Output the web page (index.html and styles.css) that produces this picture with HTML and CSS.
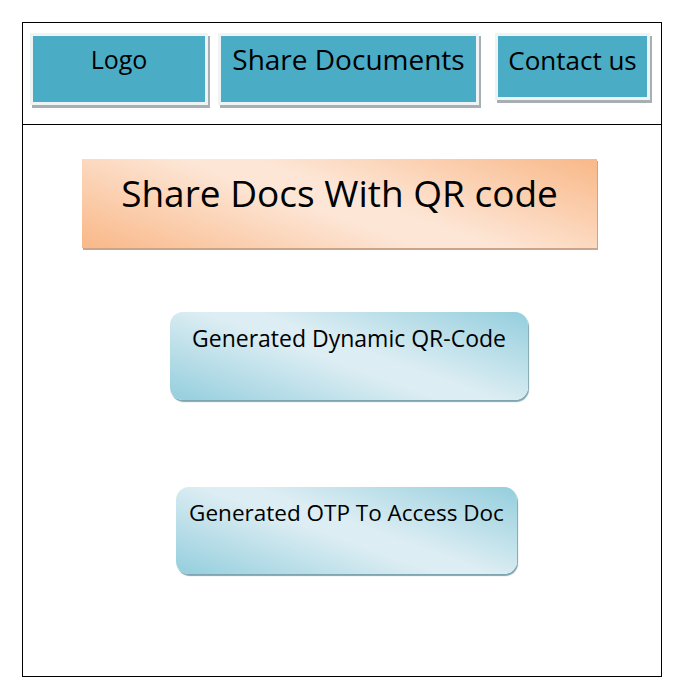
FILE: index.html
```html
<!DOCTYPE html>
<html lang="en">
<head>
    <meta charset="UTF-8">
    <meta name="viewport" content="width=device-width, initial-scale=1.0">
    <title>Share Docs With QR code</title>
    <link rel="stylesheet" href="styles.css">
</head>
<body>

    <div class="frame">

        <!-- Top Menu -->
        <div class="menu">
            <div class="menu-item menu-logo">Logo</div>
            <div class="menu-item menu-share">Share Documents</div>
            <div class="menu-item menu-contact">Contact us</div>
        </div>

        <!-- Main Area -->
        <div class="content">
            <div class="title-box">Share Docs With QR code</div>

            <div class="action action-qr">Generated Dynamic QR-Code</div>
            <div class="action action-otp">Generated OTP To Access Doc</div>
        </div>

    </div>

</body>
</html>
```

FILE: styles.css
```css
/* Reset */
* {
    margin: 0;
    padding: 0;
    box-sizing: border-box;
}

body {
    background: #ffffff;
    font-family: 'Open Sans', 'Liberation Sans', sans-serif;
    color: #000;
}

/* Outer frame */
.frame {
    width: 640px;
    height: 655px;
    margin: 22px 0 0 22px;
    border: 1.5px solid #000;
}

/* Menu */
.menu {
    height: 102px;
    border-bottom: 1.5px solid #000;
    display: flex;
    align-items: flex-start;
    padding: 10px 0 0 7px;
}

.menu-item {
    background: #4bacc6;
    border: 3px solid #eef3f5;
    box-shadow: 2px 3px 0 #a7afb3;
    text-align: center;
    line-height: 1;
    padding-top: 11px;
}

.menu-logo {
    width: 178px;
    height: 72px;
    font-size: 25px;
}

.menu-share {
    width: 261px;
    height: 72px;
    margin-left: 10px;
    font-size: 28px;
    padding-top: 9px;
}

.menu-contact {
    width: 155px;
    height: 67px;
    margin-left: 16px;
    font-size: 26px;
}

/* Content */
.content {
    display: flex;
    flex-direction: column;
    align-items: flex-start;
    padding-top: 34px;
}

.title-box {
    width: 515px;
    height: 89px;
    margin-left: 59px;
    background: linear-gradient(200deg, #f9b888 0%, #fde6d6 45%, #fde6d6 55%, #f9b888 100%);
    box-shadow: 1px 2px 0 #c9a58c;
    font-size: 37px;
    text-align: center;
    padding-top: 8px;
}

.action {
    border-radius: 13px;
    background: linear-gradient(200deg, #94cedd 0%, #dcedf3 45%, #dcedf3 55%, #94cedd 100%);
    box-shadow: 1px 2px 1px #7fa5b0;
    text-align: center;
    padding-top: 10px;
}

.action-qr {
    width: 358px;
    height: 88px;
    margin: 64px 0 0 147px;
    font-size: 23px;
}

.action-otp {
    width: 341px;
    height: 87px;
    margin: 87px 0 0 153px;
    font-size: 22.5px;
}
```
